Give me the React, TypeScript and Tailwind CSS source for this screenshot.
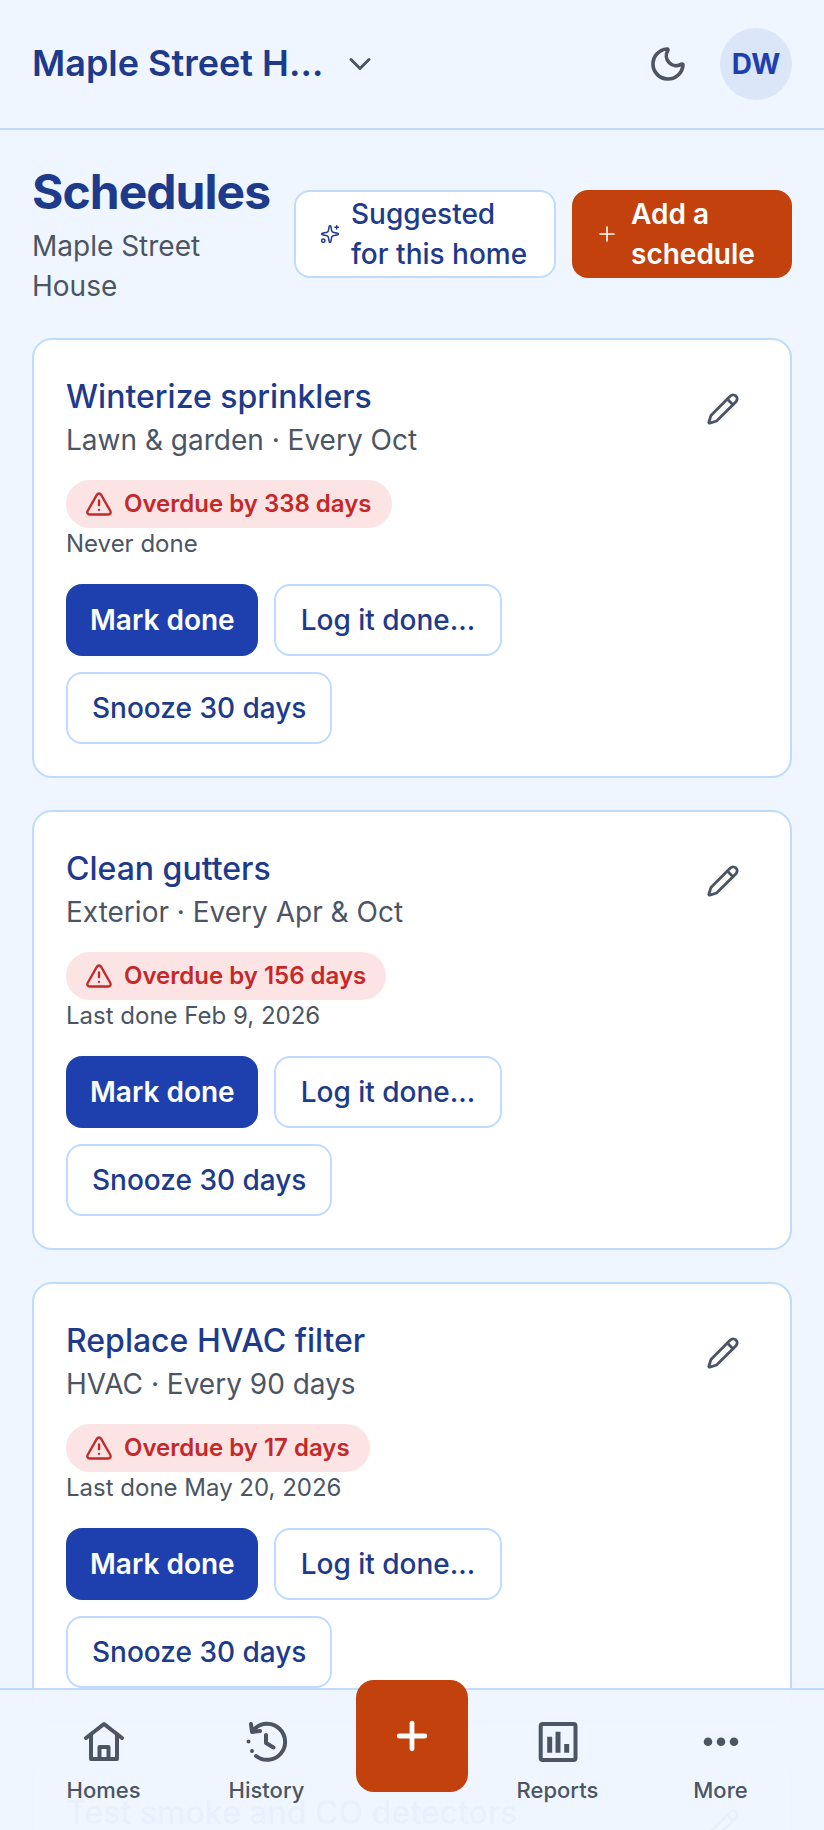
import { ChevronDown, Moon, Pencil, Plus, Sparkles, TriangleAlert } from "lucide-react";

const schedules = [
  { title: "Winterize sprinklers", meta: "Lawn & garden · Every Oct", overdue: "Overdue by 338 days", last: "Never done" },
  { title: "Clean gutters", meta: "Exterior · Every Apr & Oct", overdue: "Overdue by 156 days", last: "Last done Feb 9, 2026" },
  { title: "Replace HVAC filter", meta: "HVAC · Every 90 days", overdue: "Overdue by 17 days", last: "Last done May 20, 2026" },
  { title: "Test smoke and CO detectors", meta: "Safety · Every 6 months", overdue: "Overdue by 9 days", last: "Last done Jan 2, 2026" },
];

const ScheduleCard = ({ item }: { item: (typeof schedules)[number] }) => {
  return (
    <article className="rounded-[20px] border-2 border-[#bfdbfe] bg-white px-[32px] pt-[33px] pb-[32px]">
      <div className="flex items-start justify-between">
        <div>
          <h2 className="text-[32px] leading-[47px] font-medium text-[#1e3a8a]">{item.title}</h2>
          <p className="text-[28px] leading-[40px] text-[#4b5563]">{item.meta}</p>
        </div>
        <button className="mt-[14px] mr-[13px] flex h-[44px] w-[44px] items-center justify-center text-[#4b5563]">
          <Pencil size={34} strokeWidth={2} />
        </button>
      </div>
      <div className="mt-[20px] flex w-fit items-center gap-[11px] rounded-full bg-[#fde4e4] py-[8px] pr-[20px] pl-[19px] text-[24px] leading-[32px] font-semibold text-[#c62828]">
        <TriangleAlert size={28} strokeWidth={2} />
        {item.overdue}
      </div>
      <p className="text-[24px] leading-[32px] text-[#4b5563]">{item.last}</p>
      <div className="mt-[24px] flex flex-wrap gap-[16px]">
        <button className="h-[72px] rounded-[16px] bg-[#1e40af] pr-[23px] pl-[24px] text-[28px] font-semibold text-white">Mark done</button>
        <button className="h-[72px] rounded-[16px] border-2 border-[#bfdbfe] bg-white px-[25px] text-[28px] font-medium text-[#1e3a8a]">Log it done...</button>
        <button className="h-[72px] rounded-[16px] border-2 border-[#bfdbfe] bg-white px-[24px] text-[28px] font-medium text-[#1e3a8a]">Snooze 30 days</button>
      </div>
    </article>
  );
};

const NavItem = ({ label, children }: { label: string; children: React.ReactNode }) => {
  return (
    <div className="flex flex-1 flex-col items-center gap-[11px] text-[#4b5563]">
      <svg width="46" height="46" viewBox="0 0 46 46" fill="none" stroke="currentColor" strokeWidth="4" strokeLinecap="round" strokeLinejoin="round">
        {children}
      </svg>
      <span className="text-[22px] leading-[30px] font-medium">{label}</span>
    </div>
  );
};

export default function App() {
  return (
    <div className="relative h-[1830px] overflow-hidden bg-[#eff6ff] font-['Inter',sans-serif]">
      <header className="flex h-[130px] items-center justify-between border-b-2 border-[#bfdbfe] bg-[#f0f6ff] px-[32px]">
        <div className="flex items-center gap-[16px]">
          <span className="w-[294px] truncate pb-[2px] text-[36px] font-semibold text-[#1e3a8a]">Maple Street House</span>
          <ChevronDown size={36} strokeWidth={2} className="text-[#4b5563]" />
        </div>
        <div className="flex items-center gap-[32px]">
          <Moon size={40} strokeWidth={2.2} className="text-[#4b5563]" />
          <div className="flex h-[72px] w-[72px] items-center justify-center rounded-full bg-[#dbe6f8] text-[28px] font-bold text-[#1e40af]">DW</div>
        </div>
      </header>

      <main className="px-[32px] pt-[34px]">
        <div className="flex items-start justify-between">
          <div className="w-[240px]">
            <h1 className="text-[48px] leading-[56px] tracking-[-0.02em] font-bold text-[#1e3a8a]">Schedules</h1>
            <p className="mt-[6px] text-[28px] leading-[40px] text-[#4b5563]">Maple Street House</p>
          </div>
          <div className="mt-[26px] flex gap-[16px]">
            <button className="flex h-[88px] w-[262px] items-center gap-[11px] rounded-[16px] border-2 border-[#bfdbfe] bg-white px-[24px] text-left text-[28px] leading-[40px] font-medium text-[#1e3a8a]">
              <Sparkles size={20} strokeWidth={1.8} className="shrink-0" />
              Suggested for this home
            </button>
            <button className="flex h-[88px] w-[220px] items-center gap-[12px] rounded-[16px] bg-[#c2410c] pr-[26px] pl-[23px] text-left text-[28px] leading-[40px] font-semibold text-white">
              <Plus size={24} strokeWidth={1.6} className="shrink-0" />
              Add a schedule
            </button>
          </div>
        </div>

        <div className="mt-[32px] flex flex-col gap-[32px]">
          {schedules.map((item) => (
            <ScheduleCard key={item.title} item={item} />
          ))}
        </div>
      </main>

      <nav className="absolute inset-x-0 bottom-0 flex h-[142px] items-start border-t-2 border-[#bfdbfe] bg-[#f0f6ff]/97 px-[22px] pt-[28px]">
        <NavItem label="Homes">
          <path d="M5 20 23 6l18 14M10 17v24h26V17M18.5 41V29h9v12" />
        </NavItem>
        <NavItem label="History">
          <path d="M11 10.5A18 18 0 1 1 12 38M7 6l1 8 8-1M22 17v8l7.5 4.5M4.5 23.5h.01M8 33h.01" />
        </NavItem>
        <div className="w-[128px]" />
        <NavItem label="Reports">
          <rect x="5.7" y="6" width="34.8" height="36" rx="2" />
          <path strokeLinecap="butt" strokeWidth="5" d="M14.7 34.7V18.7M23 34.7V13.7M31.7 34.7V26" />
        </NavItem>
        <NavItem label="More">
          <g fill="currentColor" stroke="none">
            <circle cx="10" cy="23.7" r="4.3" />
            <circle cx="23" cy="23.7" r="4.3" />
            <circle cx="36" cy="23.7" r="4.3" />
          </g>
        </NavItem>
        <button className="absolute top-[-10px] left-[356px] flex h-[112px] w-[112px] items-center justify-center rounded-[18px] bg-[#c2410c] text-white">
          <Plus size={44} strokeWidth={2.6} />
        </button>
      </nav>
    </div>
  );
}
